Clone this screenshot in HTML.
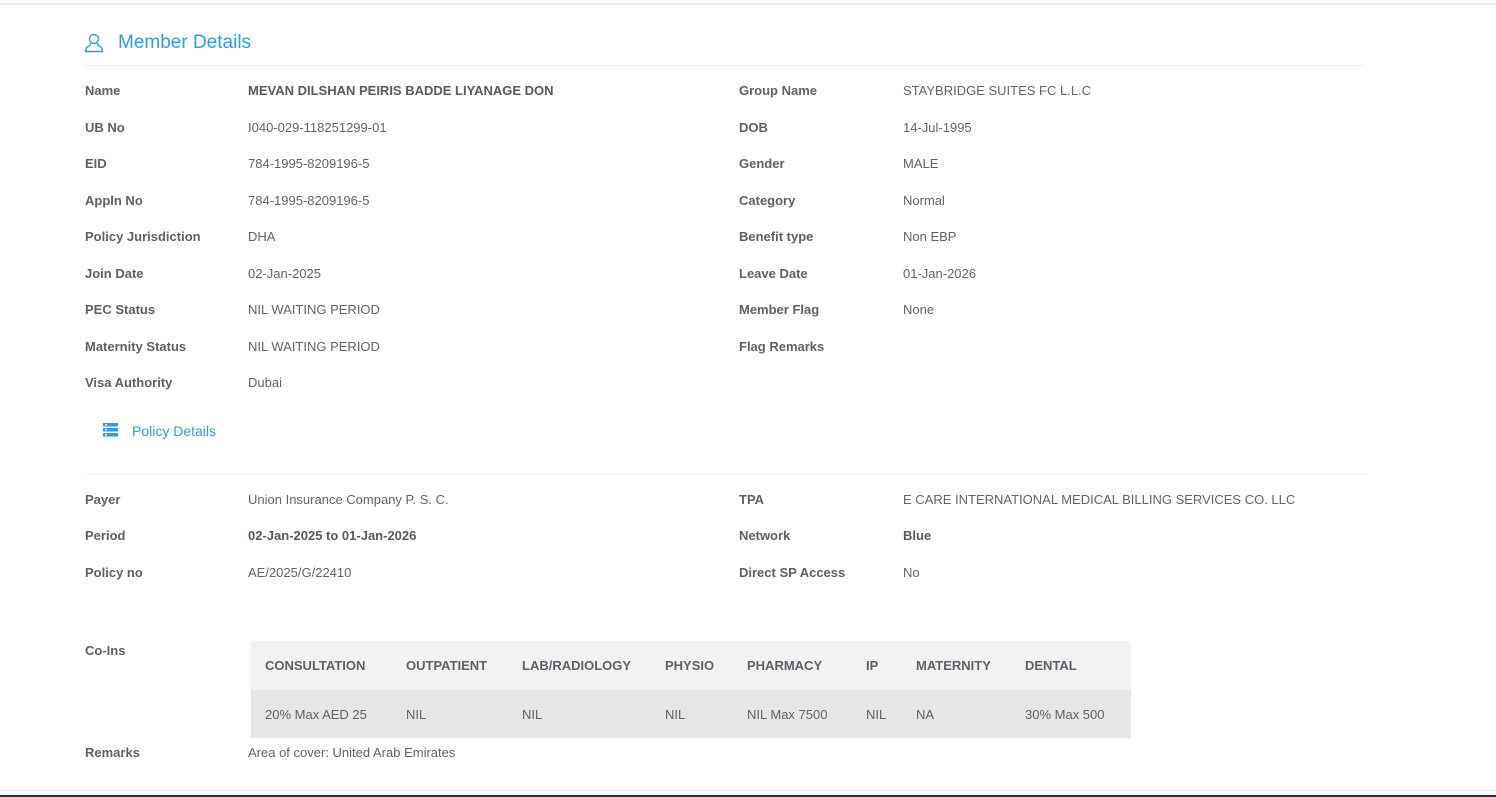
<!DOCTYPE html>
<html><head><meta charset="utf-8"><style>
body{margin:0;width:1496px;height:797px;background:#fff;position:relative;overflow:hidden;font-family:"Liberation Sans",sans-serif;}
.a{position:absolute;white-space:nowrap;font-size:13px;color:#5f6368;}
.l{font-weight:bold;color:#5c6168;}
.b{font-weight:bold;color:#555a60;}
.h{color:#2f9be8;}
.ln{position:absolute;left:84px;width:1281px;height:1px;background:#eeeeee;}
table{position:absolute;left:251px;top:641px;width:880px;border-collapse:collapse;font-size:13px;}
th{background:#f2f2f2;color:#5c6168;text-align:left;font-weight:bold;height:49px;padding:0 0 0 14px;}
td{background:#e6e6e6;color:#5f6368;height:48px;padding:0 0 0 14px;}
</style></head><body>
<div style="position:absolute;left:0;top:3px;width:1496px;height:2px;background:#eaeaea"></div>
<svg style="position:absolute;left:84px;top:33px" width="20" height="20" viewBox="0 0 20 20" fill="none" stroke="#2f9be8" stroke-width="1.4"><circle cx="10" cy="6" r="4.5"/><path d="M6.5 10 L6 12.5 Q1.5 14 1.5 18.5 H18.5 Q18.5 14 14 12.5 L13.5 10"/></svg>
<div class="a h" style="left:118px;top:32px;font-size:19px">Member Details</div>
<div class="ln" style="top:65px"></div>

<div class="a l" style="left:85px;top:83px">Name</div><div class="a b" style="left:248px;top:83px">MEVAN DILSHAN PEIRIS BADDE LIYANAGE DON</div>
<div class="a l" style="left:85px;top:120px">UB No</div><div class="a" style="left:248px;top:120px">I040-029-118251299-01</div>
<div class="a l" style="left:85px;top:156px">EID</div><div class="a" style="left:248px;top:156px">784-1995-8209196-5</div>
<div class="a l" style="left:85px;top:193px">Appln No</div><div class="a" style="left:248px;top:193px">784-1995-8209196-5</div>
<div class="a l" style="left:85px;top:229px">Policy Jurisdiction</div><div class="a" style="left:248px;top:229px">DHA</div>
<div class="a l" style="left:85px;top:266px">Join Date</div><div class="a" style="left:248px;top:266px">02-Jan-2025</div>
<div class="a l" style="left:85px;top:302px">PEC Status</div><div class="a" style="left:248px;top:302px">NIL WAITING PERIOD</div>
<div class="a l" style="left:85px;top:339px">Maternity Status</div><div class="a" style="left:248px;top:339px">NIL WAITING PERIOD</div>
<div class="a l" style="left:85px;top:375px">Visa Authority</div><div class="a" style="left:248px;top:375px">Dubai</div>

<div class="a l" style="left:739px;top:83px">Group Name</div><div class="a" style="left:903px;top:83px">STAYBRIDGE SUITES FC L.L.C</div>
<div class="a l" style="left:739px;top:120px">DOB</div><div class="a" style="left:903px;top:120px">14-Jul-1995</div>
<div class="a l" style="left:739px;top:156px">Gender</div><div class="a" style="left:903px;top:156px">MALE</div>
<div class="a l" style="left:739px;top:193px">Category</div><div class="a" style="left:903px;top:193px">Normal</div>
<div class="a l" style="left:739px;top:229px">Benefit type</div><div class="a" style="left:903px;top:229px">Non EBP</div>
<div class="a l" style="left:739px;top:266px">Leave Date</div><div class="a" style="left:903px;top:266px">01-Jan-2026</div>
<div class="a l" style="left:739px;top:302px">Member Flag</div><div class="a" style="left:903px;top:302px">None</div>
<div class="a l" style="left:739px;top:339px">Flag Remarks</div>

<svg style="position:absolute;left:103px;top:423px" width="16" height="14" viewBox="0 0 16 14" fill="#2f9be8"><rect x="0" y="0" width="15" height="3.5"/><rect x="0" y="5" width="15" height="3.5"/><rect x="0" y="10" width="15" height="3.5"/><rect x="2" y="1" width="2" height="1.5" fill="#fff"/><rect x="2" y="6" width="2" height="1.5" fill="#fff"/><rect x="2" y="11" width="2" height="1.5" fill="#fff"/></svg>
<div class="a h" style="left:132px;top:423px;font-size:14px">Policy Details</div>
<div class="ln" style="top:474px"></div>

<div class="a l" style="left:85px;top:492px">Payer</div><div class="a" style="left:248px;top:492px">Union Insurance Company P. S. C.</div>
<div class="a l" style="left:85px;top:528px">Period</div><div class="a b" style="left:248px;top:528px">02-Jan-2025 to 01-Jan-2026</div>
<div class="a l" style="left:85px;top:565px">Policy no</div><div class="a" style="left:248px;top:565px">AE/2025/G/22410</div>
<div class="a l" style="left:739px;top:492px">TPA</div><div class="a" style="left:903px;top:492px">E CARE INTERNATIONAL MEDICAL BILLING SERVICES CO. LLC</div>
<div class="a l" style="left:739px;top:528px">Network</div><div class="a b" style="left:903px;top:528px">Blue</div>
<div class="a l" style="left:739px;top:565px">Direct SP Access</div><div class="a" style="left:903px;top:565px">No</div>

<div class="a l" style="left:85px;top:643px">Co-Ins</div>
<table><tr><th style="width:127px">CONSULTATION</th><th style="width:102px">OUTPATIENT</th><th style="width:129px">LAB/RADIOLOGY</th><th style="width:68px">PHYSIO</th><th style="width:105px">PHARMACY</th><th style="width:36px">IP</th><th style="width:95px">MATERNITY</th><th>DENTAL</th></tr>
<tr><td>20% Max AED 25</td><td>NIL</td><td>NIL</td><td>NIL</td><td>NIL Max 7500</td><td>NIL</td><td>NA</td><td>30% Max 500</td></tr></table>

<div class="a l" style="left:85px;top:745px">Remarks</div><div class="a" style="left:248px;top:745px">Area of cover: United Arab Emirates</div>
<div style="position:absolute;left:0;top:790px;width:1496px;height:1px;background:#ececf0"></div>
<div style="position:absolute;left:0;top:795px;width:1496px;height:2px;background:#28323a"></div>
</body></html>
